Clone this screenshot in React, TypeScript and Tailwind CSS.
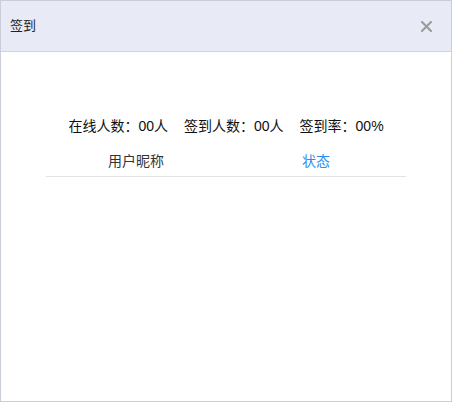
import React from "react";

export default function App() {
  const font = { fontFamily: '"Liberation Sans", "Noto Sans CJK SC", sans-serif' };
  return (
    <div
      className="w-[452px] h-[402px] box-border border border-[#c9ced8] bg-white flex flex-col"
      style={font}
    >
      <div className="h-[51px] box-border border-b border-[#cfd4de] bg-[#e8eaf5] flex items-center justify-between pl-[9px] pr-[19px]">
        <span className="text-[13px] leading-[20px] text-[#222]">签到</span>
        <svg width="11" height="11" viewBox="0 0 11 11" className="block">
          <path d="M1 1 L10 10 M10 1 L1 10" stroke="#9a9a9a" strokeWidth="2" strokeLinecap="square" />
        </svg>
      </div>
      <div className="flex flex-col items-center pt-[64px]">
        <div className="flex gap-[16px] text-[14px] leading-[20px] text-[#111]">
          <span>在线人数：00人</span>
          <span>签到人数：00人</span>
          <span>签到率：00%</span>
        </div>
        <div className="mt-[10px] w-[360px] grid grid-cols-2 h-[31px] box-border border-b border-[#e3e3e3] text-[14px] leading-[30px]">
          <div className="text-center text-[#333]">用户昵称</div>
          <div className="text-center text-[#2d8cf0]">状态</div>
        </div>
      </div>
    </div>
  );
}
